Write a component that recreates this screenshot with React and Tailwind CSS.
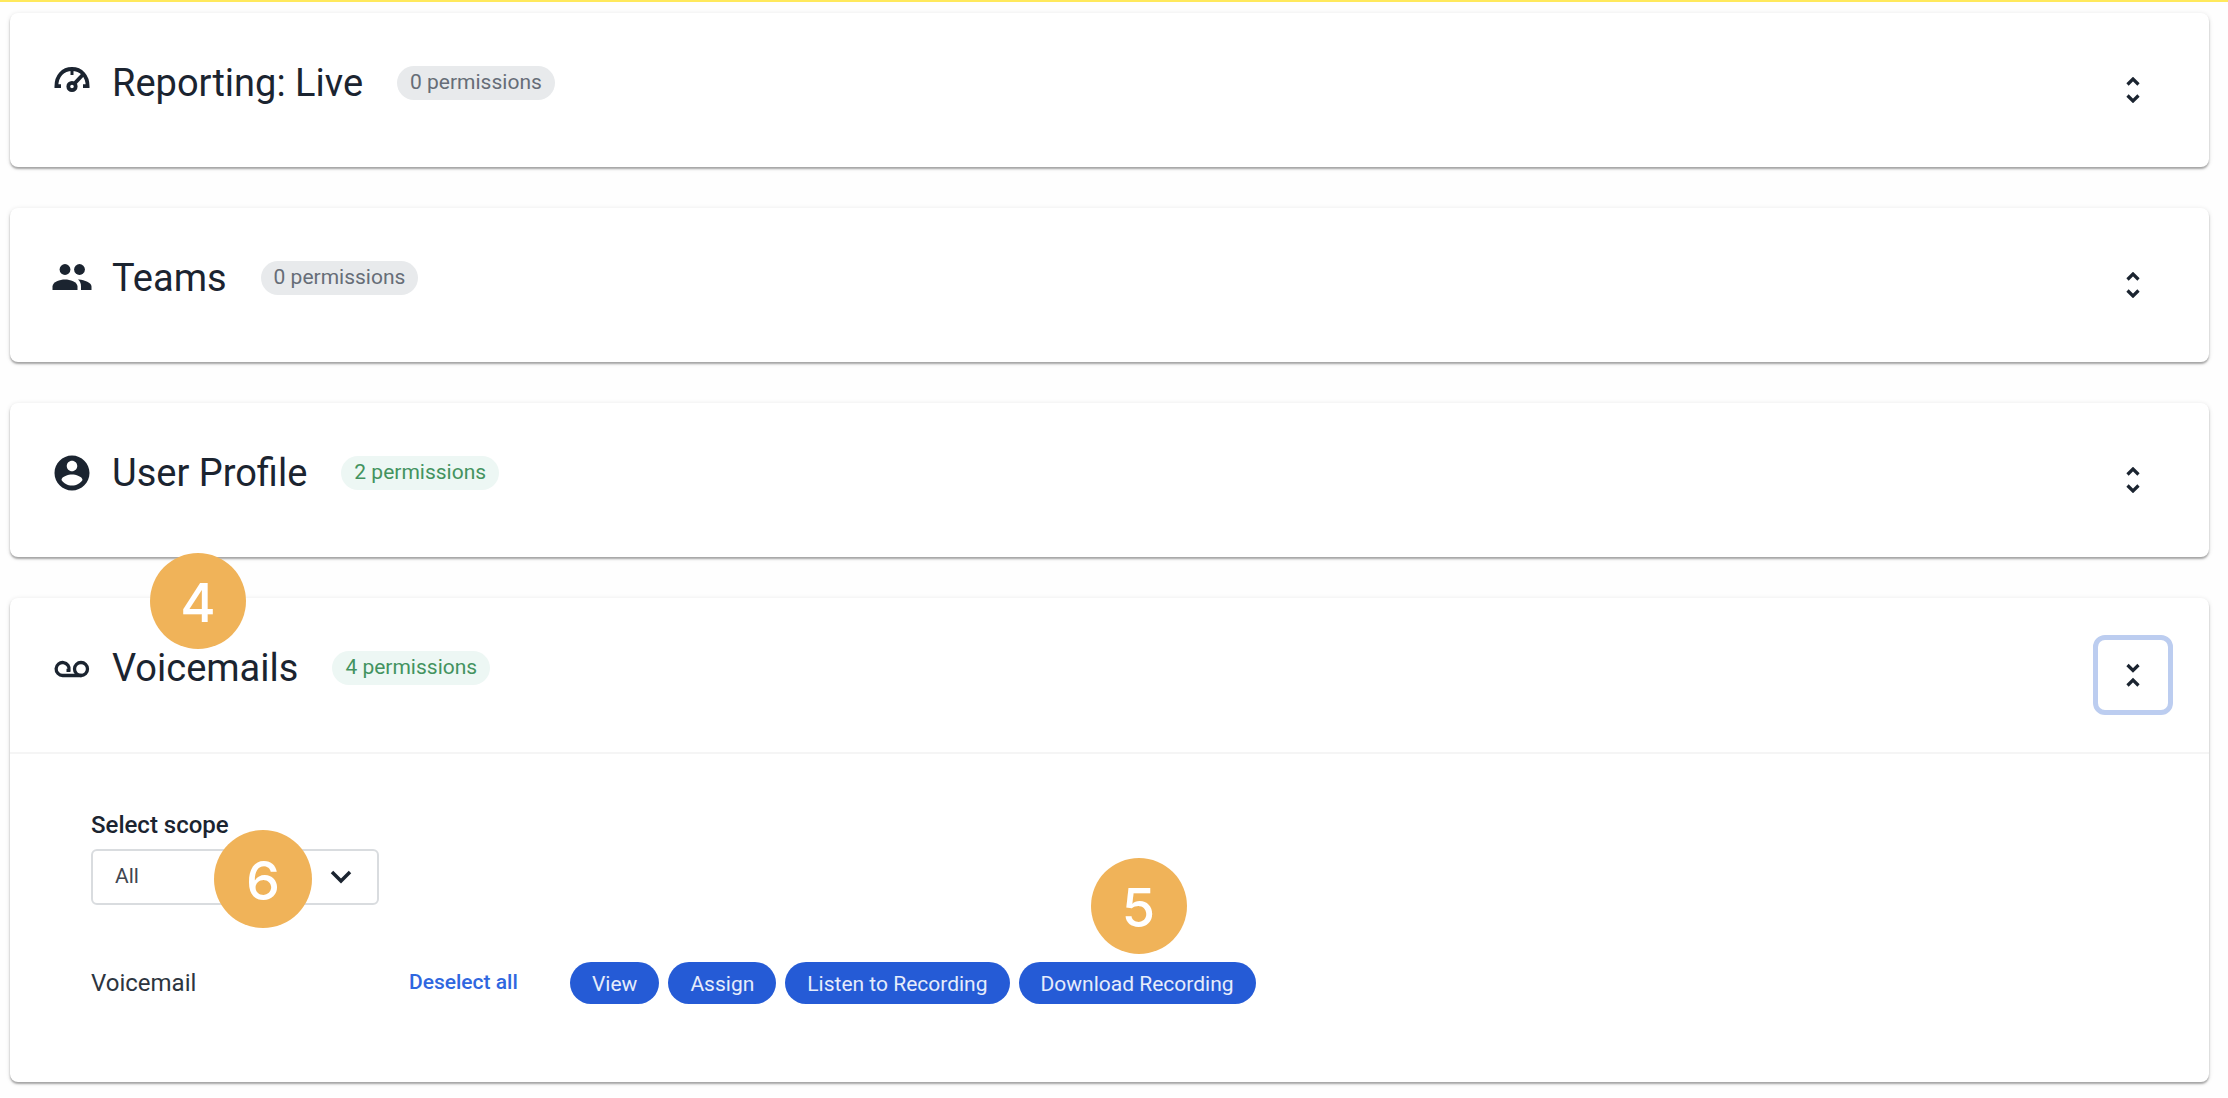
import { useState } from "react";

function GaugeIcon() {
  return (
    <svg viewBox="0 0 40 40" className="size-10" fill="none" stroke="currentColor" strokeWidth="3.8" aria-hidden="true">
      <path d="M9 23.200H4.400C4.400 13 10.800 6 20 6S35.600 13 35.600 23.200H31" />
      <path d="M20 6v6" strokeWidth="3" />
      <path d="M22.500 20.500L31.500 11" />
      <circle cx="20" cy="23.500" r="3.700" />
    </svg>
  );
}

function TeamsIcon() {
  return (
    <svg viewBox="0 0 40 40" className="size-10" fill="currentColor" aria-hidden="true">
      <circle cx="13" cy="11.500" r="5.400" />
      <circle cx="27.500" cy="11.500" r="5.400" />
      <path d="M.5 32v-3.500C.5 24 8 21.500 13 21.500S25.500 24 25.500 28.500V32z" />
      <path d="M27 21.600c5.500.8 12.500 3 12.500 6.900V32H29v-3.500c0-3-1-5.200-3-6.900z" />
    </svg>
  );
}

function UserIcon() {
  return (
    <svg viewBox="0 0 24 24" className="size-[42px] shrink-0" fill="currentColor" aria-hidden="true">
      <path d="M12 2C6.480 2 2 6.480 2 12s4.480 10 10 10 10-4.480 10-10S17.520 2 12 2zm0 3c1.660 0 3 1.340 3 3s-1.340 3-3 3-3-1.340-3-3 1.340-3 3-3zm0 14.200c-2.500 0-4.710-1.280-6-3.220.03-1.990 4-3.080 6-3.080 1.990 0 5.970 1.090 6 3.080-1.290 1.940-3.500 3.220-6 3.220z" />
    </svg>
  );
}

function VoicemailIcon() {
  return (
    <svg viewBox="0 0 40 40" className="size-10" fill="none" stroke="currentColor" strokeWidth="3.3" aria-hidden="true">
      <path d="M14.500 22.300H17A6.500 6.500 0 1 0 10.700 27.500H29.500" />
      <circle cx="29" cy="21" r="6.500" />
    </svg>
  );
}

function ToggleIcon({ open }) {
  return (
    <svg viewBox="0 0 26 26" className="size-[26px]" fill="none" stroke="currentColor" strokeWidth="3.2" aria-hidden="true">
      {open ? <path d="M7.500 3l5.500 5.500L18.500 3M7.500 23.500l5.500-5.500 5.500 5.500" /> : <path d="M7.500 7.500L13 2l5.500 5.500M7.500 18.500L13 24l5.500-5.500" />}
    </svg>
  );
}

function Marker({ children, className }) {
  return (
    <span className={`absolute flex items-center justify-center rounded-full bg-[#f0b359] pt-1 font-[Inter,sans-serif] text-[54px] leading-none font-medium text-white ${className}`}>
      {children}
    </span>
  );
}

function PermissionCard({ icon, title, count, open, marker, children }) {
  return (
    <section className="relative rounded-lg bg-white shadow-[0_2px_2px_rgba(0,0,0,0.3),0_1px_5px_rgba(0,0,0,0.12)]">
      <header className="flex h-[154px] items-center justify-between pr-9 pl-[42px]">
        <div className="flex items-center pb-[15px]">
          <span className="flex w-10 justify-center">{icon}</span>
          <h2 className="ml-5 text-[38px] leading-[48px]">{title}</h2>
          <span className={`ml-[34px] flex h-[34px] items-center rounded-full px-[13px] text-[21px] ${count ? "bg-[#edf7f4] text-[#43935f]" : "bg-[#e8eaec] text-[#666d77]"}`}>
            {count} permissions
          </span>
        </div>
        <button
          type="button"
          aria-expanded={open}
          aria-label={`Toggle ${title}`}
          className={`flex size-20 items-center justify-center rounded-xl ${open ? "border-[5px] border-[#bccdf0]" : ""}`}
        >
          <ToggleIcon open={open} />
        </button>
      </header>
      {marker}
      {children}
    </section>
  );
}

const ACTIONS = ["View", "Assign", "Listen to Recording", "Download Recording"];

export default function App() {
  const [scope, setScope] = useState("All");
  return (
    <main className="flex flex-col gap-[41px] border-t-2 border-[#ffe95c] bg-[#fefefe] pt-[11px] pr-[19px] pb-[15px] pl-[10px] font-[Roboto,sans-serif] text-[#1b2430]">
      <PermissionCard icon={<GaugeIcon />} title="Reporting: Live" count={0} open={false} />
      <PermissionCard icon={<TeamsIcon />} title="Teams" count={0} open={false} />
      <PermissionCard icon={<UserIcon />} title="User Profile" count={2} open={false} />
      <PermissionCard
        icon={<VoicemailIcon />}
        title="Voicemails"
        count={4}
        open
        marker={<Marker className="-top-[45px] left-[140px] size-24">4</Marker>}
      >
        <div className="border-t-2 border-[#f5f5f5] px-[81px] pt-[55px] pb-[78px]">
          <label htmlFor="scope" className="block text-[24px] leading-8 font-medium">
            Select scope
          </label>
          <div className="relative mt-2 w-72">
            <select
              id="scope"
              value={scope}
              onChange={(e) => setScope(e.target.value)}
              className="h-14 w-full appearance-none rounded-md border-2 border-[#d9dcdf] bg-white px-[22px] text-[21px] text-[#3f4650]"
            >
              <option>All</option>
              <option>Team</option>
            </select>
            <svg viewBox="0 0 24 24" className="pointer-events-none absolute top-4 right-[26px] size-6" fill="none" stroke="currentColor" strokeWidth="3.500" aria-hidden="true">
              <path d="M3 7l9 9 9-9" />
            </svg>
            <Marker className="-top-[19px] left-[123px] size-[98px]">6</Marker>
          </div>
          <div className="mt-[57px] flex items-center">
            <span className="w-[318px] text-[24px] leading-8 text-[#2d3540]">Voicemail</span>
            <button type="button" className="w-[161px] text-left text-[21px] font-medium text-[#2f67e0]">
              Deselect all
            </button>
            <div className="flex gap-[9px]">
              {ACTIONS.map((action) => (
                <span key={action} className="relative">
                  <button type="button" className="h-[42px] rounded-full bg-[#255bd6] px-[22px] pt-1 text-[21px] text-[#e6ecfb]">
                    {action}
                  </button>
                  {action === "Download Recording" && <Marker className="-top-[104px] left-[72px] size-24">5</Marker>}
                </span>
              ))}
            </div>
          </div>
        </div>
      </PermissionCard>
    </main>
  );
}
